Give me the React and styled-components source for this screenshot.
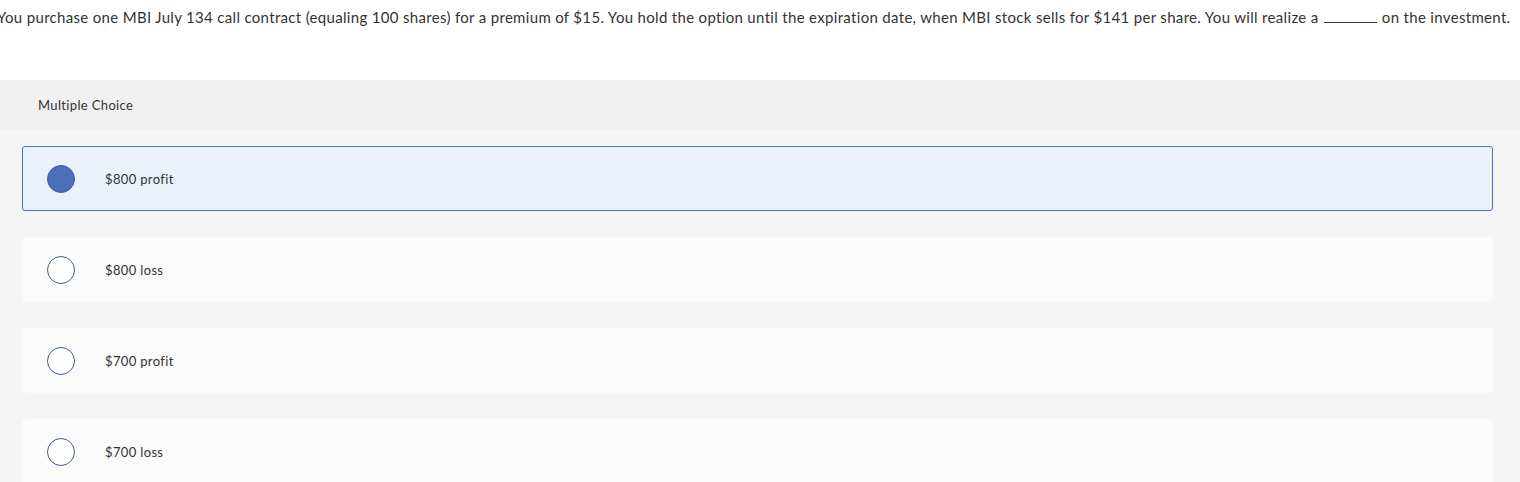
import styled, { createGlobalStyle } from 'styled-components';

const GlobalStyle = createGlobalStyle`
	html, body {
		margin: 0;
		padding: 0;
		background: #f5f5f5;
	}
	body {
		font-family: Lato, 'Open Sans', Arial, sans-serif;
		font-variant-ligatures: none;
		color: #333;
	}
`;

const choices = [
    { id: 'a', label: '$800 profit', selected: true },
    { id: 'b', label: '$800 loss' },
    { id: 'c', label: '$700 profit' },
    { id: 'd', label: '$700 loss' },
];

const App = () => (
    <Page>
        <GlobalStyle />
        <QuestionArea>
            <Question>
                You purchase one MBI July 134 call contract (equaling 100 shares) for a premium of $15. You hold the option
                until the expiration date, when MBI stock sells for $141 per share. You will realize a <Blank /> on the
                investment.
            </Question>
        </QuestionArea>
        <TypeBar>Multiple Choice</TypeBar>
        <ChoiceList>
            {choices.map((c) => (
                <Choice key={c.id} $selected={c.selected}>
                    <Radio $selected={c.selected} />
                    <ChoiceLabel>{c.label}</ChoiceLabel>
                </Choice>
            ))}
        </ChoiceList>
    </Page>
);

const Page = styled.div`
	width: 1520px;
	min-height: 482px;
	background: #f5f5f5;
	overflow: hidden;
`;

const QuestionArea = styled.div`
	background: #fff;
	height: 80px;
	padding-top: 7px;
	box-sizing: border-box;
`;

const Question = styled.p`
	margin: 0 0 0 -3px;
	white-space: nowrap;
	font-size: 15px;
	line-height: 20px;
	letter-spacing: 0.322px;
	color: #333;
`;

const Blank = styled.span`
	display: inline-block;
	width: 53px;
	border-bottom: 1px solid #333;
	margin: 0 1px;
`;

const TypeBar = styled.div`
	height: 49px;
	background: #f0f0f0;
	display: flex;
	align-items: center;
	padding-left: 38px;
	font-size: 13px;
	letter-spacing: 0.35px;
	color: #333;
`;

const ChoiceList = styled.div`
	display: flex;
	flex-direction: column;
	gap: 26px;
	padding: 17px 27px 0 22px;
`;

const Choice = styled.div`
	height: 65px;
	box-sizing: border-box;
	display: flex;
	align-items: center;
	padding-left: 24px;
	border-radius: 3px;
	background: ${(p) => (p.$selected ? '#eaf1fb' : '#fafafa')};
	border: 1px solid ${(p) => (p.$selected ? '#4a72c4' : 'transparent')};
`;

const Radio = styled.span`
	width: 28px;
	height: 28px;
	box-sizing: border-box;
	border-radius: 50%;
	border: 1.5px solid #3f5d94;
	background: ${(p) => (p.$selected ? '#4a6fbb' : '#fff')};
	flex-shrink: 0;
`;

const ChoiceLabel = styled.span`
	margin-left: 30px;
	font-size: 13px;
	letter-spacing: 0.35px;
	color: #333;
`;

export default App;
